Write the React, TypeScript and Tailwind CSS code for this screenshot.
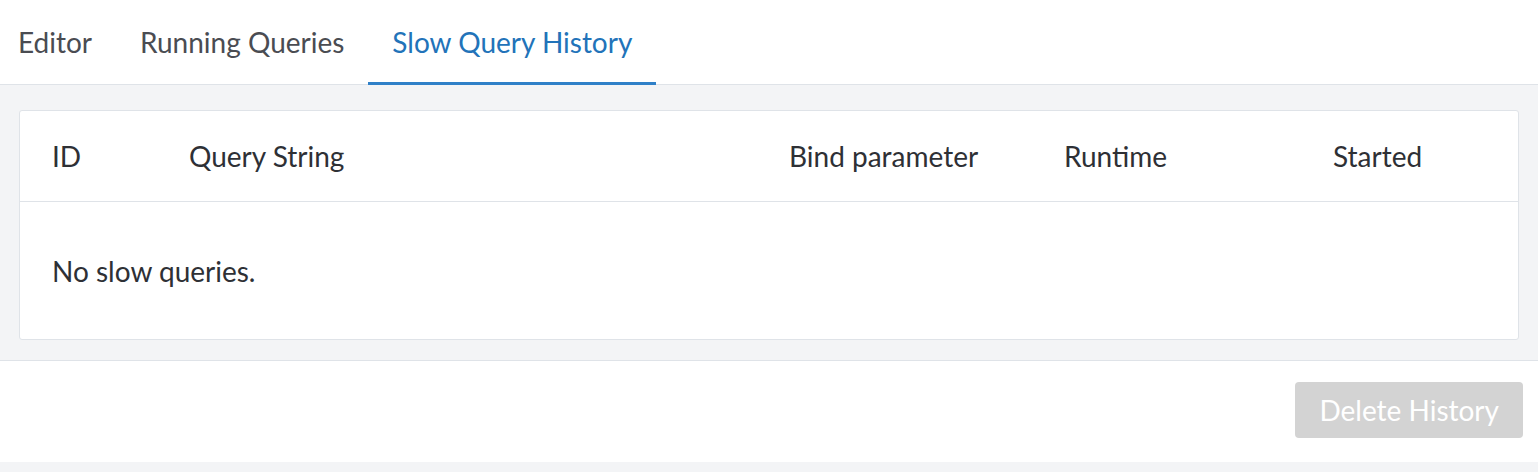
import { useState } from 'react';

const tabs = ['Editor', 'Running Queries', 'Slow Query History'];

export default function App() {
  const [active, setActive] = useState('Slow Query History');

  return (
    <div className="w-[1538px] h-[472px] bg-[#f3f4f6] text-[#2e3035] font-['Lato','Noto_Sans',sans-serif]">
      {/* Tabs */}
      <div className="flex h-[85px] bg-white border-b border-[#dfe3e8] pl-[18px]">
        {tabs.map(t => (
          <button
            key={t}
            onClick={() => setActive(t)}
            className={`relative h-full text-[28px] leading-none ${t === 'Editor' ? 'pr-[24px]' : 'px-[24px]'} ${active === t ? 'text-[#2273b9]' : 'text-[#4a4c52]'}`}
          >
            {t}
            {active === t && <span className="absolute left-0 right-0 -bottom-px h-[3px] bg-[#2f80c8]" />}
          </button>
        ))}
      </div>

      {/* Table */}
      <div className="px-[19px] pt-[25px] pb-[20px] border-b border-[#dfe3e8]">
        <div className="bg-white border border-[#dfe3e8] rounded-[3px]">
          <div className="grid grid-cols-[137px_600px_275px_269px_1fr] pl-[32px] h-[91px] items-center border-b border-[#dfe3e8] text-[28px]">
            {['ID', 'Query String', 'Bind parameter', 'Runtime', 'Started'].map(h => (
              <span key={h}>{h}</span>
            ))}
          </div>
          <div className="h-[137px] flex items-center pl-[32px] text-[28px]">No slow queries.</div>
        </div>
      </div>

      {/* Footer */}
      <div className="bg-white h-[101px] flex justify-end items-start pt-[21px] pr-[15px]">
        <button
          disabled
          className="h-[56px] px-[24px] rounded-[4px] bg-[#d3d3d3] text-white text-[28px]"
        >
          Delete History
        </button>
      </div>
    </div>
  );
}
